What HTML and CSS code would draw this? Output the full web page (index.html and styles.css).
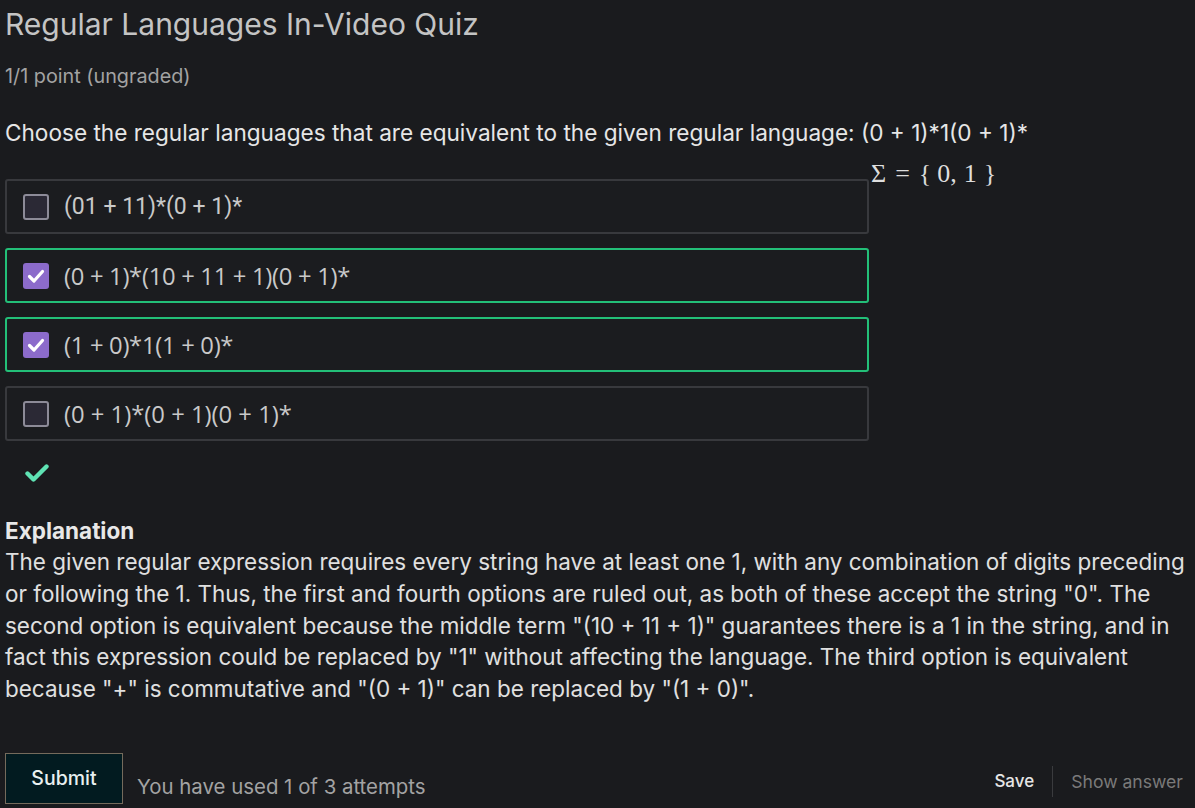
FILE: index.html
```html
<!DOCTYPE html>
<html>
<head>
<meta charset="utf-8">
<link rel="stylesheet" href="styles.css">
</head>
<body>
<div class="page">
  <h1 class="title">Regular Languages In-Video Quiz</h1>
  <div class="points">1/1 point (ungraded)</div>
  <p class="question">Choose the regular languages that are equivalent to the given regular language: (0 + 1)*1(0 + 1)*</p>
  <div class="math"><span class="sig">Σ</span><span class="eq">=</span><span class="br">{</span><span class="num">0,</span><span class="num one">1</span><span class="br">}</span></div>
  <div class="options">
    <label class="opt">
      <span class="box"></span>
      <span class="otext first">(01 + 11)*(0 + 1)*</span>
    </label>
    <label class="opt correct">
      <span class="box checked"><svg viewBox="0 0 26 26" width="26" height="26"><path d="M6.5 13.5 L11 18 L19.5 8.5" fill="none" stroke="#fff" stroke-width="3.2" stroke-linecap="round" stroke-linejoin="round"/></svg></span>
      <span class="otext tight">(0 + 1)*(10 + 11 + 1)(0 + 1)*</span>
    </label>
    <label class="opt correct">
      <span class="box checked"><svg viewBox="0 0 26 26" width="26" height="26"><path d="M6.5 13.5 L11 18 L19.5 8.5" fill="none" stroke="#fff" stroke-width="3.2" stroke-linecap="round" stroke-linejoin="round"/></svg></span>
      <span class="otext tight">(1 + 0)*1(1 + 0)*</span>
    </label>
    <label class="opt">
      <span class="box"></span>
      <span class="otext">(0 + 1)*(0 + 1)(0 + 1)*</span>
    </label>
  </div>
  <div class="status"><svg viewBox="0 0 24 20" width="24" height="20"><path d="M2.5 10.5 L8.5 16.5 L21.5 3.5" fill="none" stroke="#5fe3b4" stroke-width="4.4" stroke-linecap="round" stroke-linejoin="round"/></svg></div>
  <div class="explanation">
    <div class="exp-title">Explanation</div>
    <p class="exp-text">The given regular expression requires every string have at least one 1, with any combination of digits preceding or following the 1. Thus, the first and fourth options are ruled out, as both of these accept the string "0". The second option is equivalent because the middle term "(10 + 11 + 1)" guarantees there is a 1 in the string, and in fact this expression could be replaced by "1" without affecting the language. The third option is equivalent because "+" is commutative and "(0 + 1)" can be replaced by "(1 + 0)".</p>
  </div>
  <div class="actions">
    <div class="left">
      <button class="submit">Submit</button>
      <span class="attempts">You have used 1 of 3 attempts</span>
    </div>
    <div class="right">
      <span class="save">Save</span>
      <span class="sep"></span>
      <span class="show">Show answer</span>
    </div>
  </div>
</div>
</body>
</html>
```
FILE: styles.css
```css
html, body {
  margin: 0;
  padding: 0;
  background: #1a1b1e;
}
body {
  font-family: Inter, "Noto Sans", sans-serif;
  color: #e2e2e2;
}
.page {
  padding: 0 0 0 5px;
}
.title {
  margin: 0;
  padding-top: 6px;
  font-size: 30px;
  font-weight: 400;
  line-height: 36px;
  color: #c4c4c4;
}
.points {
  margin-top: 23px;
  font-size: 19.8px;
  line-height: 22px;
  color: #a3a3a3;
}
.question {
  margin: 32px 0 0 0;
  font-size: 22.6px;
  line-height: 28px;
  color: #e6e6e6;
}
.math {
  margin-left: 866px;
  height: 32px;
  margin-top: 11px;
  margin-bottom: -11px;
  font-family: "Liberation Serif", "DejaVu Serif", serif;
  font-size: 26px;
  line-height: 32px;
  color: #dedede;
  white-space: nowrap;
  display: flex;
  align-items: flex-start;
  position: relative;
  z-index: 1;
}
.math .sig { margin-right: 9px; }
.math .eq { margin-right: 9px; }
.math .br { color: #d8d8d8; margin-right: 6px; }
.math .num { margin-right: 7px; }
.math .one { margin-right: 7px; }
.options {
  width: 864px;
  display: flex;
  flex-direction: column;
  gap: 14px;
}
.opt {
  display: flex;
  align-items: center;
  height: 51px;
  padding: 0 16px;
  border: 2px solid #38393d;
  border-radius: 3px;
  background: #1b1c1f;
  gap: 15px;
}
.opt.correct {
  border-color: #23bf78;
}
.box {
  width: 22px;
  height: 22px;
  border: 2px solid #8d8b98;
  border-radius: 3px;
  background: #2b2935;
  flex: none;
}
.box.checked {
  width: 26px;
  height: 26px;
  border: none;
  background: #8c6bcb;
}
.box svg { display: block; }
.otext {
  font-family: "Open Sans", "Noto Sans", sans-serif;
  font-size: 23.8px;
  color: #c9c9c9;
  line-height: 28px;
}
.otext.tight {
  letter-spacing: -0.3px;
}
.otext.first {
  font-family: Roboto, sans-serif;
  font-size: 23px;
}
.status {
  padding: 22px 0 0 20px;
  height: 38px;
}
.status svg { display: block; }
.explanation {
  margin-top: 16px;
}
.exp-title {
  font-weight: 700;
  font-size: 22.5px;
  line-height: 28px;
  color: #e8e8e8;
}
.exp-text {
  margin: 1px 0 0 0;
  font-size: 22.47px;
  line-height: 31.8px;
  color: #e0e0e0;
}
.actions {
  margin-top: 48px;
  display: flex;
  justify-content: space-between;
  align-items: flex-start;
}
.left {
  display: flex;
  align-items: flex-end;
  gap: 14px;
}
.submit {
  width: 118px;
  height: 51px;
  background: #021b20;
  border: 1px solid #756b5c;
  color: #e8f0f0;
  font-family: Inter, sans-serif;
  font-size: 19.5px;
  font-weight: 500;
  padding: 0;
  margin: 0;
}
.attempts {
  font-size: 20.4px;
  color: #a3a3a3;
  line-height: 24px;
  padding-bottom: 5px;
}
.right {
  display: flex;
  align-items: center;
  padding-top: 13px;
  padding-right: 12px;
}
.save {
  font-size: 17px;
  font-weight: 500;
  color: #e6e6e6;
}
.sep {
  width: 1px;
  height: 31px;
  background: #3a3b3e;
  margin: 0 18px 0 18px;
}
.show {
  font-size: 17.6px;
  color: #7a7a7a;
}
```
